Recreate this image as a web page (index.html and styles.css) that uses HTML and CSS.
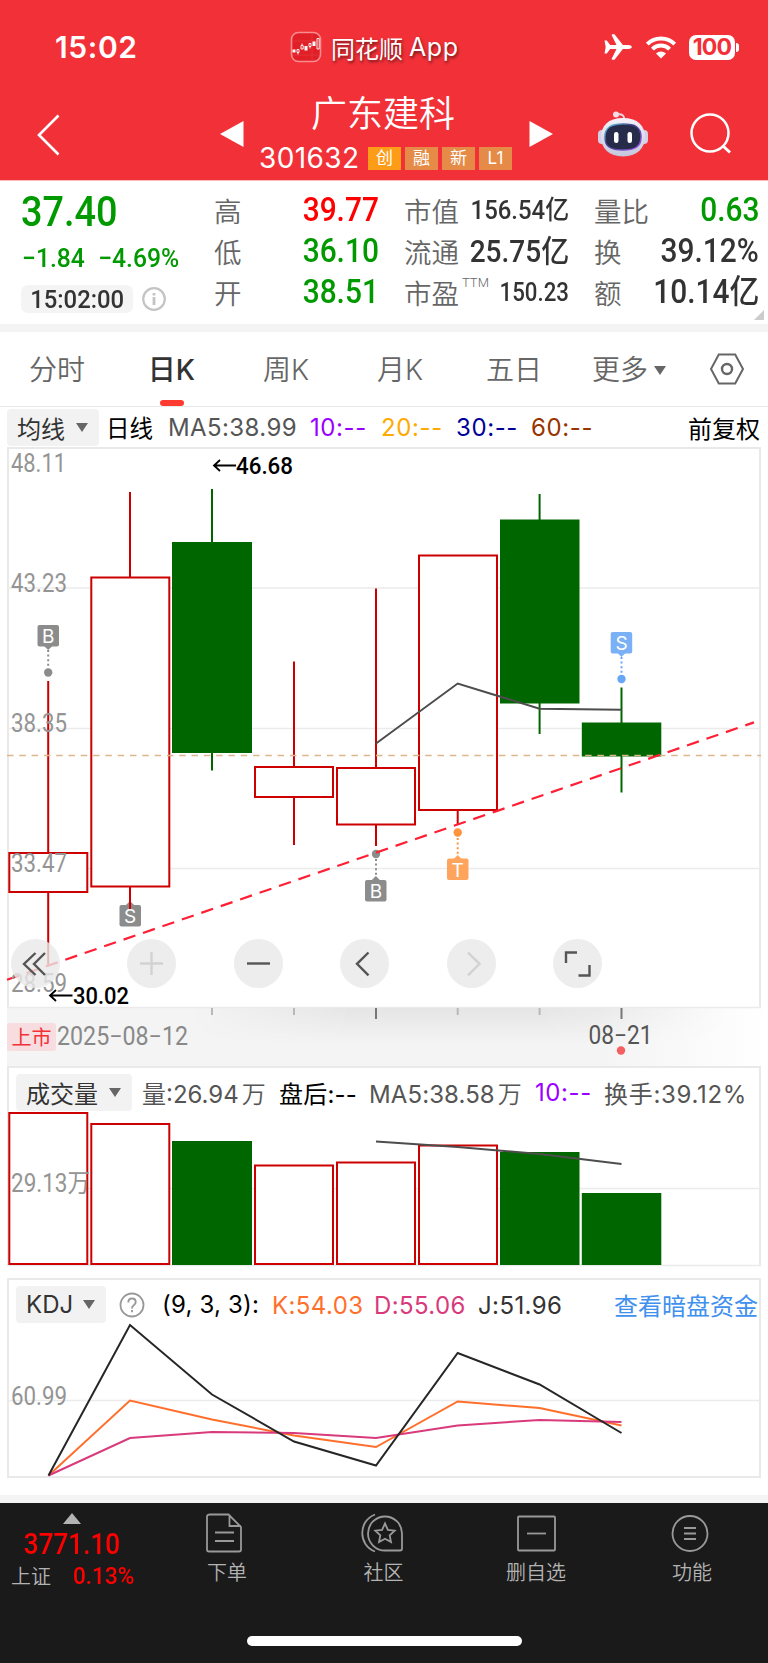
FILE: index.html
```html
<!DOCTYPE html>
<html lang="zh-CN">
<head>
    <meta charset="UTF-8">
    <meta name="viewport" content="width=device-width, initial-scale=1.0">
    <title>广东建科 301632</title>
    <link rel="stylesheet" href="styles.css">
</head>
<body>
    <header class="header">
        <!-- Status bar -->
        <div class="status-bar">
            <span class="clock">15:02</span>
            <div class="app-name">
                <svg class="app-icon" width="32" height="32" viewBox="0 0 32 32">
                    <rect x="1.5" y="1.5" width="29" height="29" rx="7" fill="#e01f26" stroke="#f98c90" stroke-width="1.6"/>
                    <path d="M3 10h26M3 24h26M22 3v26" stroke="#ea4046" stroke-width=".6"/>
                    <path d="M2.5 18.5h3v3h-3zM14.5 15h3v4.5h-3zM22.5 10.500h3v4.500h-3z" fill="#fff"/>
                    <path d="M7 18.500h2v3h-2zM8 21.500v2M11 14.500h2.200v3.500h-2.200zM12 12.500v2M19 12.500h2v3h-2zM20 15.500v2M27 7.500h2.200v10.500h-2.200z" fill="none" stroke="#fff" stroke-width=".9"/>
                </svg>
                <span>同花顺</span><span class="latin">App</span>
            </div>
            <div class="status-icons">
                <svg width="30" height="28" viewBox="0 0 30 28">
                    <path d="M1.500 7.500h2.300l3.400 4.600h6.300L8.700 2.200q-.3-1 .7-1h2.100l8.400 10.900h6q3 .4 3 1.900t-3 1.900h-6L11.500 26.800H9.400q-1 0-.7-1l4.800-9.900H7.200l-3.400 4.600H1.500l1.200-6.500z" fill="#fff"/>
                </svg>
                <svg width="32" height="24" viewBox="0 0 32 24">
                    <path d="M2.300 9.200a19.500 19.500 0 0 1 27.400 0M7.400 14.100a12.300 12.300 0 0 1 17.200 0" fill="none" stroke="#fff" stroke-width="4"/>
                    <path d="M16 23.500l-5-5a7.200 7.200 0 0 1 10 0z" fill="#fff"/>
                </svg>
                <div class="battery">100</div>
            </div>
        </div>

        <!-- Stock title -->
        <div class="nav-bar">
            <svg class="back" width="24" height="42" viewBox="0 0 24 42"><path d="M21.500 1.500L2 21l19.500 19.500" fill="none" stroke="#fff" stroke-width="2.600"/></svg>
            <svg class="prev" width="24" height="26" viewBox="0 0 24 26"><path d="M23.500 0v26L0 13z" fill="#fff"/></svg>
            <div class="stock">
                <h1>广东建科</h1>
                <div class="stock-sub">
                    <span class="code">301632</span>
                    <span class="badge main">创</span>
                    <span class="badge">融</span>
                    <span class="badge">新</span>
                    <span class="badge">L1</span>
                </div>
            </div>
            <svg class="next" width="24" height="26" viewBox="0 0 24 26"><path d="M.5 0v26L24 13z" fill="#fff"/></svg>
            <svg class="robot" width="50" height="46" viewBox="0 0 50 46">
                <defs>
                    <linearGradient id="shell" x1="0" y1="0" x2="0" y2="1"><stop offset="0" stop-color="#f6f2fa"/><stop offset="1" stop-color="#c4c6dd"/></linearGradient>
                    <linearGradient id="rim" x1="0" y1="0" x2="1" y2="1"><stop offset="0" stop-color="#66d6e8"/><stop offset=".4" stop-color="#3c3d84"/><stop offset="1" stop-color="#a25cf0"/></linearGradient>
                </defs>
                <path d="M19 3.500q7-1.500 7.500 5" fill="none" stroke="#e6d9e6" stroke-width="2"/>
                <circle cx="18" cy="3.500" r="3" fill="#f5dce4"/>
                <rect x="0" y="19" width="8" height="14" rx="4" fill="#d5cfe6"/>
                <rect x="42" y="19" width="8" height="14" rx="4" fill="#d5cfe6"/>
                <path d="M25 7C40 7 47 15 47 26S39 45.500 25 45.500 3 37 3 26 10 7 25 7z" fill="url(#shell)"/>
                <path d="M25 13c12 0 18 3 18 13s-6 13-18 13S7 36 7 26s6-13 18-13z" fill="#262b4a" stroke="url(#rim)" stroke-width="1.500"/>
                <rect x="16" y="21" width="4.500" height="11" rx="2.200" fill="#fff"/>
                <rect x="29.500" y="21" width="4.500" height="11" rx="2.200" fill="#fff"/>
            </svg>
            <svg class="search" width="44" height="44" viewBox="0 0 44 44"><circle cx="21" cy="21" r="18.500" fill="none" stroke="#fff" stroke-width="2.500"/><path d="M33.500 33.500l7.500 7" stroke="#fff" stroke-width="3"/></svg>
        </div>
    </header>

    <!-- Quote -->
    <section class="quote">
        <div class="price">
            <div class="last">37.40</div>
            <div class="change"><span>−1.84</span><span>−4.69%</span></div>
            <div class="time">
                <span class="time-pill"><span>15:02:00</span></span>
                <svg width="24" height="24" viewBox="0 0 24 24"><circle cx="12" cy="12" r="10.800" fill="none" stroke="#c4c4c4" stroke-width="2.200"/><path d="M12 6v2.500M12 10v8" stroke="#c4c4c4" stroke-width="2.800"/></svg>
            </div>
        </div>
        <dl class="stats stats-a">
            <div><dt>高</dt><dd class="up">39.77</dd></div>
            <div><dt>低</dt><dd class="down">36.10</dd></div>
            <div><dt>开</dt><dd class="down">38.51</dd></div>
        </dl>
        <dl class="stats stats-b">
            <div><dt>市值</dt><dd class="s">156.54亿</dd></div>
            <div><dt>流通</dt><dd class="m">25.75亿</dd></div>
            <div><dt>市盈<sup>TTM</sup></dt><dd class="xs">150.23</dd></div>
        </dl>
        <dl class="stats stats-c">
            <div><dt>量比</dt><dd class="down">0.63</dd></div>
            <div><dt>换</dt><dd>39.12%</dd></div>
            <div><dt>额</dt><dd>10.14亿</dd></div>
        </dl>
    </section>

    <!-- Period tabs -->
    <nav class="tabs">
        <span>分时</span>
        <span class="active">日K</span>
        <span>周K</span>
        <span>月K</span>
        <span>五日</span>
        <span class="more">更多<i class="caret"></i></span>
        <span class="setting"><svg width="36" height="32" viewBox="0 0 36 32"><path d="M9.800 1.500h16.400L34 16l-7.800 14.500H9.800L2 16z" fill="none" stroke="#666" stroke-width="2"/><circle cx="18" cy="16" r="5" fill="none" stroke="#666" stroke-width="2.400"/></svg></span>
    </nav>

    <!-- K line -->
    <div class="legend legend-k">
        <span class="select">均线<i class="caret"></i></span>
        <span class="day">日线</span>
        <span class="ma5">MA5:38.99</span>
        <span class="ma10">10:--</span>
        <span class="ma20">20:--</span>
        <span class="ma30">30:--</span>
        <span class="ma60">60:--</span>
        <span class="adjust">前复权</span>
    </div>
    <div class="k-chart">
        <svg width="768" height="619" viewBox="0 447 768 619">
            <defs>
                <linearGradient id="fade" x1="0" y1="0" x2="1" y2="0"><stop offset="0" stop-color="#f4f4f4"/><stop offset=".78" stop-color="#f4f4f4"/><stop offset="1" stop-color="#fff"/></linearGradient>
                <linearGradient id="shadeY" x1="0" y1="0" x2="0" y2="1"><stop offset="0" stop-color="#000" stop-opacity=".06"/><stop offset="1" stop-color="#000" stop-opacity="0"/></linearGradient>
                <linearGradient id="shadeX" x1="0" y1="0" x2="1" y2="0"><stop offset="0" stop-color="#000"/><stop offset=".3" stop-color="#fff"/><stop offset=".65" stop-color="#fff"/><stop offset="1" stop-color="#000"/></linearGradient>
                <mask id="shadeMask"><rect x="190" y="1008" width="540" height="40" fill="url(#shadeX)"/></mask>
            </defs>
            <rect x="7" y="1008" width="761" height="58" fill="url(#fade)"/>
            <rect x="190" y="1008" width="540" height="36" fill="url(#shadeY)" mask="url(#shadeMask)"/>
            <path class="grid" d="M8 588h752M8 728.500h752M8 868.500h752"/>
            <path class="frame" d="M8 1007.500V448h752v560"/>
            <path class="grid" d="M7 1007.500h754"/>

            <g fill="#8c8c8c"><rect x="37.500" y="625" width="21.500" height="21.500" rx="2"/><path d="M44 646l4.200 4 4.200-4z"/><circle cx="48.200" cy="672.500" r="4.200"/><rect x="119.500" y="905" width="21.500" height="21.500" rx="2"/><path d="M126 905l4-4 4 4z"/><rect x="365" y="880" width="21.500" height="21.500" rx="2"/><path d="M371.800 880l4-4 4 4z"/><circle cx="376" cy="854" r="4.200"/></g>
            <path class="dots" d="M48.200 650v17M376 859v17" stroke="#8c8c8c"/>

            <g class="rise">
                <path d="M48.200 681v171M48.200 893v73M130 492v85M130 887v22M294 661.500V766M294 797.500V845M376 588.500V767M376 825v21M457.700 811v13.500"/>
                <rect x="9.300" y="853" width="78" height="39"/>
                <rect x="91.300" y="577.500" width="78" height="309"/>
                <rect x="255" y="767" width="78" height="30"/>
                <rect x="337" y="768" width="78" height="56.500"/>
                <rect x="419" y="555.500" width="78" height="254.500"/>
            </g>
            <g class="fall">
                <path d="M212 489v54M212 752v18.500M539.600 494v26M539.600 703v31M621.500 687.500V723M621.500 755v37.500"/>
                <rect x="172" y="542" width="80" height="211"/>
                <rect x="500" y="519.500" width="79.500" height="184"/>
                <rect x="581.800" y="722.500" width="79.500" height="34"/>
            </g>
            <path class="now" d="M7 755.500h754"/>
            <path class="trend" d="M7 979.800L754 722.400"/>
            <path class="line" stroke="#4d4d4d" d="M376 743.500l81.700-60 81.900 25.300 81.900 1"/>

            <g fill="#ffa45c"><rect x="447" y="858.500" width="21.500" height="21.500" rx="2"/><path d="M453.700 859l4-4 4 4z"/><circle cx="457.700" cy="832.500" r="4.200" fill="#ff943d"/></g>
            <path class="dots" d="M457.700 838v17" stroke="#ff943d"/>
            <g fill="#7ab0f5"><rect x="610.700" y="632" width="21.500" height="21.500" rx="2"/><path d="M617.500 653l4 4 4-4z"/><circle cx="621.500" cy="679" r="4.200" fill="#67a7f5"/></g>
            <path class="dots" d="M621.500 657v17" stroke="#67a7f5"/>
            <g class="mark-text">
                <text x="48.200" y="642.500">B</text><text x="130" y="923">S</text><text x="376" y="898">B</text><text x="457.700" y="876.500">T</text><text x="621.500" y="650">S</text>
            </g>

            <g class="axis">
                <text x="11" y="472" textLength="55" lengthAdjust="spacingAndGlyphs">48.11</text>
                <text x="11" y="591.500" textLength="56" lengthAdjust="spacingAndGlyphs">43.23</text>
                <text x="11" y="732" textLength="56" lengthAdjust="spacingAndGlyphs">38.35</text>
                <text x="11" y="872" textLength="56" lengthAdjust="spacingAndGlyphs">33.47</text>
                <text x="11" y="992" textLength="56" lengthAdjust="spacingAndGlyphs">28.59</text>
            </g>
            <g class="peak">
                <text x="236" y="474" textLength="57" lengthAdjust="spacingAndGlyphs">46.68</text>
                <text x="73" y="1004" textLength="56" lengthAdjust="spacingAndGlyphs">30.02</text>
                <path d="M236 465.500h-22m6-5.500l-6 5.500 6 5.500M72.500 995.500H50m6-5.500l-6 5.500 6 5.500"/>
            </g>

            <path d="M212 1008v7M294 1008v7M457.700 1008v7M539.600 1008v7" stroke="#b8b8b8" stroke-width="2"/>
            <path d="M376 1008v11M621.500 1008v11" stroke="#777" stroke-width="2"/>
            <rect x="7" y="1023" width="49" height="28" rx="2" fill="#f7dde0"/>
            <text class="listed" x="11.500" y="1045">上市</text>
            <g class="date">
                <text x="57" y="1044.500" textLength="131" lengthAdjust="spacingAndGlyphs">2025−08−12</text>
                <text x="588.500" y="1044" textLength="64" lengthAdjust="spacingAndGlyphs" fill="#555">08−21</text>
            </g>
            <circle cx="621" cy="1050.500" r="4.200" fill="#f55f5f"/>
        </svg>
        <div class="tools">
            <button><svg width="49" height="49" viewBox="0 0 49 49"><path d="M24.500 14L13 25l11.500 11M34 14L23 25l11 11"/></svg></button>
            <button class="off"><svg width="49" height="49" viewBox="0 0 49 49"><path d="M13 24.500h23M24.500 13v23"/></svg></button>
            <button><svg width="49" height="49" viewBox="0 0 49 49"><path d="M13 24.500h23"/></svg></button>
            <button><svg width="49" height="49" viewBox="0 0 49 49"><path d="M28.500 13.500L17 24.800l11.500 11.500"/></svg></button>
            <button class="off"><svg width="49" height="49" viewBox="0 0 49 49"><path d="M21 13.500l11.500 11.300L21 36.300"/></svg></button>
            <button><svg width="49" height="49" viewBox="0 0 49 49"><path d="M13 24V13.500h11M36.500 26v10.500H25.500"/></svg></button>
        </div>
    </div>

    <!-- Volume -->
    <div class="panel">
        <div class="legend legend-vol">
            <span class="select">成交量<i class="caret"></i></span>
            <span class="vol">量:26.94<b>万</b></span>
            <span class="after">盘后:--</span>
            <span class="ma5">MA5:38.58<b>万</b></span>
            <span class="ma10">10:--</span>
            <span class="turnover">换手:39.12%</span>
        </div>
        <svg width="768" height="212" viewBox="0 1066 768 212">
            <path class="grid" d="M8 1188.500h752M7 1265.500h754"/>
            <path class="frame" d="M8 1266V1067h752v199"/>
            <g class="rise">
                <rect x="9.300" y="1113" width="78" height="151"/>
                <rect x="91.300" y="1124" width="78" height="140"/>
                <rect x="255" y="1165.500" width="78" height="98.500"/>
                <rect x="337" y="1162.500" width="78" height="101.500"/>
                <rect x="419" y="1145.500" width="78" height="118.500"/>
            </g>
            <g class="fall">
                <rect x="172" y="1141" width="80" height="124"/>
                <rect x="500" y="1152" width="79.500" height="113"/>
                <rect x="581.800" y="1193" width="79.500" height="72"/>
            </g>
            <path class="line" stroke="#4d4d4d" d="M376 1141.500L457.700 1147l81.900 7 81.900 10"/>
            <g class="axis"><text x="11" y="1191.500" textLength="79" lengthAdjust="spacingAndGlyphs">29.13万</text></g>
        </svg>
    </div>

    <!-- KDJ -->
    <div class="panel">
        <div class="legend legend-kdj">
            <span class="select">KDJ<i class="caret"></i></span>
            <svg width="26" height="26" viewBox="0 0 26 26"><circle cx="13" cy="13" r="11.500" fill="none" stroke="#999" stroke-width="1.800"/><path d="M9.300 10.500q0-4 3.700-4t3.700 3.500q0 2-1.900 3.200T13 16.500M13 18v2.300" fill="none" stroke="#999" stroke-width="1.900"/></svg>
            <span class="params">(9, 3, 3):</span>
            <span class="k">K:54.03</span>
            <span class="d">D:55.06</span>
            <span class="j">J:51.96</span>
            <a class="link">查看暗盘资金</a>
        </div>
        <svg width="768" height="217" viewBox="0 1278 768 217">
            <path class="grid" d="M8 1400.500h752"/>
            <rect class="frame" x="8" y="1279" width="752" height="198"/>
            <path class="line" stroke="#ff6f2c" d="M48.500 1475.500L130 1400.500 212 1419.500 294 1435.500 376 1447 457.700 1401.500 539.600 1408 621.500 1425.500"/>
            <path class="line" stroke="#d83a7b" d="M48.500 1475.500L130 1438 212 1432 294 1433 376 1438 457.700 1425.500 539.600 1420 621.500 1422"/>
            <path class="line" stroke="#262626" d="M48.500 1475.500L130 1325 212 1394.500 294 1441.500 376 1465.500 457.700 1353 539.600 1384.500 621.500 1433"/>
            <g class="axis"><text x="11" y="1405" textLength="56" lengthAdjust="spacingAndGlyphs">60.99</text></g>
        </svg>
    </div>

    <!-- Bottom bar -->
    <footer class="footer">
        <div class="index">
            <svg width="18" height="11" viewBox="0 0 18 11"><path d="M9 0l9 11H0z" fill="#b3b3b3"/></svg>
            <div class="index-value">3771.10</div>
            <div class="index-sub"><span>上证</span><span class="pct">0.13%</span></div>
        </div>
        <div class="action order">
            <svg width="44" height="40" viewBox="0 0 44 40"><path d="M7 1.500h18.500L38 14v22.500q0 2-2 2H6q-2 0-2-2v-33q0-2 3-2zM26.500 1.500V13H38M12 19.500h19M12 28h19"/></svg>
            <span>下单</span>
        </div>
        <div class="action community">
            <svg width="44" height="40" viewBox="0 0 44 40"><path d="M15 1.500C-2 8-2 32 15 38.500M25 37.500A17 17 0 1 1 42 20.500v15q0 2-2 2zM25 10.500l2.900 6.300 6.800.8-5 4.700 1.300 6.800-6-3.300-6 3.300 1.300-6.800-5-4.700 6.800-.8z"/></svg>
            <span>社区</span>
        </div>
        <div class="action remove">
            <svg width="44" height="40" viewBox="0 0 44 40"><rect x="4" y="3.500" width="37" height="34" rx="1"/><path d="M13 20.500h19"/></svg>
            <span>删自选</span>
        </div>
        <div class="action feature">
            <svg width="44" height="40" viewBox="0 0 44 40"><circle cx="20" cy="20.500" r="17.500"/><path d="M14 15h12M14 20.500h12M14 26h12"/></svg>
            <span>功能</span>
        </div>
        <div class="home-bar"></div>
    </footer>
</body>
</html>
```
FILE: styles.css
```css
* {
    box-sizing: border-box;
}

body {
    margin: 0;
    width: 768px;
    height: 1663px;
    overflow: hidden;
    background: #fff;
    color: #333;
    font-family: Inter, "Noto Sans CJK SC", sans-serif;
    font-size: 24px;
}

svg {
    display: block;
    flex: none;
}

h1, dl, dd {
    margin: 0;
}

/* Header */
.header {
    height: 181px;
    background: #f23038;
    border-bottom: 1px solid #fbb9bb;
    color: #fff;
}

.status-bar {
    display: flex;
    align-items: center;
    height: 94px;
    padding-left: 55px;
}

.clock {
    width: 235px;
    font-size: 30px;
    font-weight: 600;
    letter-spacing: 0.6px;
}

.app-name {
    display: flex;
    align-items: center;
    width: 313px;
    font-size: 24px;
    text-shadow: 1px 2px 3px rgba(0, 0, 0, 0.55);
}

.app-icon {
    margin-right: 9px;
}

.latin {
    margin-left: 6px;
    font-size: 25px;
    letter-spacing: 0.6px;
}

.status-icons {
    display: flex;
    align-items: center;
    gap: 12px;
}

.battery {
    position: relative;
    width: 46px;
    height: 25px;
    border-radius: 7px;
    background: #fff;
    color: #f23038;
    font-size: 23px;
    font-weight: 700;
    line-height: 25px;
    text-align: center;
    letter-spacing: -0.8px;
}

.battery::after {
    content: "";
    position: absolute;
    top: 8px;
    right: -4px;
    width: 3px;
    height: 9px;
    border-radius: 0 3px 3px 0;
    background: #fff;
}

.nav-bar {
    display: flex;
    height: 86px;
    padding: 0 0 0 37px;
}

.back {
    margin-top: 20px;
}

.prev {
    margin: 27px 0 0 159px;
}

.stock {
    width: 287px;
    padding: 0 0 0 15px;
}

.stock h1 {
    height: 44px;
    padding-left: 52px;
    font-size: 36px;
    font-weight: 350;
    line-height: 40px;
}

.stock-sub {
    display: flex;
    align-items: center;
    gap: 4px;
    margin-top: 4px;
    height: 32px;
}

.code {
    width: 105px;
    font-size: 28px;
    letter-spacing: 0.4px;
}

.badge {
    width: 33px;
    height: 23px;
    background: #e58b47;
    font-size: 17px;
    line-height: 22px;
    text-align: center;
}

.badge.main {
    background: #fd9c17;
}

.next {
    margin-top: 27px;
    margin-left: -2px;
}

.robot {
    margin: 17px 0 0 45px;
}

.search {
    margin: 18px 0 0 41px;
}

/* Quote */
.quote {
    position: relative;
    display: flex;
    height: 151px;
    padding: 9px 0 0 22px;
    border-bottom: 8px solid #f4f4f4;
    font-family: Roboto, "Noto Sans CJK SC", sans-serif;
    font-weight: 500;
}

.quote::after {
    content: "";
    position: absolute;
    right: 4px;
    bottom: 4px;
    border-left: 10px solid transparent;
    border-bottom: 10px solid #ccc;
}

.price {
    width: 192px;
    color: #009900;
}

.last {
    height: 44px;
    margin-left: -1px;
    font-size: 43px;
    line-height: 42px;
    transform: scaleX(0.88);
    transform-origin: left;
}

.change {
    display: flex;
    gap: 14px;
    height: 46px;
    font-size: 26px;
    line-height: 48px;
    transform: scaleX(0.95);
    transform-origin: left;
}

.time {
    display: flex;
    align-items: center;
    gap: 9px;
    margin-top: -1px;
    height: 40px;
}

.time-pill {
    display: flex;
    justify-content: center;
    width: 112px;
    height: 28px;
    margin-left: -1px;
    border-radius: 7px;
    background: #f4f4f4;
    color: #333;
    font-size: 26.5px;
    line-height: 28px;
}

.time-pill span {
    transform: scaleX(0.9);
}

.stats div {
    display: flex;
    justify-content: space-between;
    height: 41px;
    line-height: 41px;
}

.stats dt {
    padding-top: 2px;
    color: #666;
    font-size: 27.5px;
    font-weight: 350;
    white-space: nowrap;
}

.stats dd {
    font-size: 32.5px;
    white-space: nowrap;
    transform: scaleX(0.92);
    transform-origin: right;
}

.stats dd.m {
    font-size: 30.5px;
}

.stats dd.s {
    font-size: 26px;
}

.stats dd.xs {
    font-size: 25px;
    transform: scaleX(0.89);
}

.stats sup {
    margin-left: 3px;
    font-size: 13px;
    line-height: 0;
    vertical-align: 17px;
}

.stats .up {
    color: #ff0000;
}

.stats .down {
    color: #009900;
}

.stats-a {
    width: 165px;
}

.stats-b {
    width: 165px;
    margin-left: 25px;
}

.stats-b dd {
    margin-left: -30px;
}

.stats-c {
    width: 165px;
    margin-left: 25px;
}

/* Tabs */
.tabs {
    display: flex;
    height: 75px;
    border-bottom: 1px solid #eaeaea;
    color: #666;
    font-size: 28px;
    font-weight: 350;
    line-height: 76px;
}

.tabs span {
    width: 114px;
    text-align: center;
    white-space: nowrap;
}

.tabs .active {
    position: relative;
    width: 115px;
    color: #333;
    font-weight: 500;
}

.active::after {
    content: "";
    position: absolute;
    left: 46px;
    bottom: 0;
    width: 24px;
    height: 6px;
    border-radius: 3px;
    background: #ff3a30;
}

.tabs .more {
    width: 116px;
}

.tabs .setting {
    padding: 21px 0 0 22px;
    width: 81px;
}

.caret {
    display: inline-block;
    border: 6.5px solid transparent;
    border-top: 9px solid #666;
    border-bottom: 0;
}

.more .caret {
    margin-left: 6px;
    vertical-align: 5px;
}

/* Legends */
.legend {
    display: flex;
    align-items: center;
    font-size: 24px;
    color: #555;
    white-space: nowrap;
}

.legend b {
    margin-left: 3px;
    font-weight: 350;
}

.select {
    display: flex;
    align-items: center;
    height: 37px;
    padding-left: 10px;
    border-radius: 4px;
    background: #f2f2f2;
    color: #333;
}

.select .caret {
    margin-left: 11px;
}

.legend-k {
    height: 40px;
    padding-left: 7px;
}

.legend-k .select {
    width: 92px;
}

.day {
    width: 62px;
    margin-left: 7px;
    color: #000;
    font-size: 23.5px;
}

.ma10,
.ma20,
.ma30,
.ma60 {
    letter-spacing: 0.6px;
}

.ma10 {
    color: #9900ff;
}

.ma20 {
    color: #ffaa00;
}

.ma30 {
    color: #000099;
}

.ma60 {
    color: #993300;
}

.legend-k .ma5 {
    width: 142px;
    letter-spacing: 0.4px;
}

.legend-k .ma10 {
    width: 71px;
}

.legend-k .ma20,
.legend-k .ma30 {
    width: 75px;
}

.adjust {
    margin-left: auto;
    padding-right: 8px;
    color: #000;
    font-size: 24px;
}

/* Charts */
.k-chart {
    position: relative;
    height: 619px;
}

.grid {
    fill: none;
    stroke: #ebebeb;
    stroke-width: 1.3;
}

.frame {
    fill: none;
    stroke: #e9e9e9;
    stroke-width: 2;
}

.rise {
    fill: none;
    stroke: #cc0000;
    stroke-width: 2;
}

.rise rect {
    fill: #fff;
}

.fall path {
    stroke: #006600;
    stroke-width: 2;
}

.fall rect {
    fill: #006600;
}

.line {
    fill: none;
    stroke-width: 2;
}

.now {
    stroke: #dcb78c;
    stroke-width: 1.3;
    stroke-dasharray: 6.5 5.8;
}

.trend {
    stroke: #ff1f35;
    stroke-width: 2.2;
    stroke-dasharray: 12.5 8.05;
}

.dots {
    stroke-width: 2;
    stroke-dasharray: 2 2.6;
}

.mark-text {
    fill: #fff;
    font-size: 19px;
    text-anchor: middle;
}

.axis {
    fill: #949494;
    font-family: Roboto, "Noto Sans CJK SC", sans-serif;
    font-size: 25px;
}

.peak {
    fill: #000;
    font-family: Roboto, sans-serif;
    font-size: 24px;
    font-weight: 500;
}

.peak path {
    fill: none;
    stroke: #000;
    stroke-width: 1.8;
}

.listed {
    fill: #f23038;
    font-size: 20px;
}

.date {
    fill: #888;
    font-family: Roboto, sans-serif;
    font-size: 25px;
}

.tools {
    position: absolute;
    top: 492px;
    left: 10.5px;
    display: flex;
    gap: 57.5px;
}

.tools button {
    width: 49px;
    height: 49px;
    padding: 0;
    border: none;
    border-radius: 50%;
    background: rgba(233, 233, 233, 0.8);
}

.tools button:first-child {
    margin-right: 10px;
}

.tools path {
    fill: none;
    stroke: #555;
    stroke-width: 2.4;
}

.tools .off path {
    stroke: #d2d2d2;
}

/* Sub charts */
.panel {
    position: relative;
}

.panel .legend {
    position: absolute;
    top: 8px;
    left: 16px;
    width: 744px;
    height: 37px;
}

.legend-vol .select {
    width: 116px;
}

.vol {
    width: 137px;
    margin-left: 10px;
}

.after {
    width: 90px;
    color: #000;
    letter-spacing: 0.2px;
}

.legend-vol .ma5 {
    width: 166px;
    letter-spacing: 0.1px;
}

.legend-vol .ma10 {
    width: 69px;
}

.turnover {
    letter-spacing: 0.7px;
}

.legend-kdj .select {
    width: 90px;
    margin-right: 13px;
}

.legend-kdj .select .caret {
    margin-left: 10px;
}

.params {
    width: 110px;
    margin-left: 17px;
    color: #000;
    letter-spacing: 0.2px;
}

.k,
.d,
.j {
    letter-spacing: 0.4px;
    line-height: 39px;
    padding-top: 2px;
}

.k {
    width: 102px;
    color: #ff6f2c;
}

.d {
    width: 104px;
    color: #d83a7b;
}

.j {
    color: #333;
}

.link {
    margin-left: auto;
    padding-right: 2px;
    color: #4090ee;
}

/* Footer */
.footer {
    position: relative;
    display: flex;
    height: 168px;
    border-top: 8px solid #f4f4f4;
    background: #1a1a1a;
    color: #b3b3b3;
    font-size: 20px;
    font-weight: 350;
}

.index {
    width: 144px;
    padding-top: 10px;
    font-family: Roboto, "Noto Sans CJK SC", sans-serif;
    text-align: center;
}

.index svg {
    margin: 0 auto;
}

.index-value {
    height: 38px;
    color: #ff0000;
    font-size: 29px;
    font-weight: 500;
    line-height: 41px;
    transform: scaleX(0.9);
}

.index-sub {
    display: flex;
    gap: 22px;
    padding-left: 11px;
    line-height: 30px;
}

.pct {
    color: #ff0000;
    font-size: 24px;
    font-weight: 500;
    line-height: 28px;
    transform: scaleX(0.94);
    transform-origin: left;
}

.action {
    display: flex;
    flex-direction: column;
    align-items: center;
    width: 156px;
    padding-top: 10px;
}

.order {
    padding-left: 10px;
}

.community {
    padding-left: 11px;
}

.remove {
    padding-left: 4px;
}

.feature {
    padding-left: 4px;
}

.action svg {
    fill: none;
    stroke: #999;
    stroke-width: 1.8;
}

.order svg,
.community svg {
    margin-right: 4px;
}

.action span {
    margin-top: 6px;
    line-height: 29px;
}

.home-bar {
    position: absolute;
    left: 247px;
    bottom: 17px;
    width: 275px;
    height: 10px;
    border-radius: 5px;
    background: #fff;
}
```
